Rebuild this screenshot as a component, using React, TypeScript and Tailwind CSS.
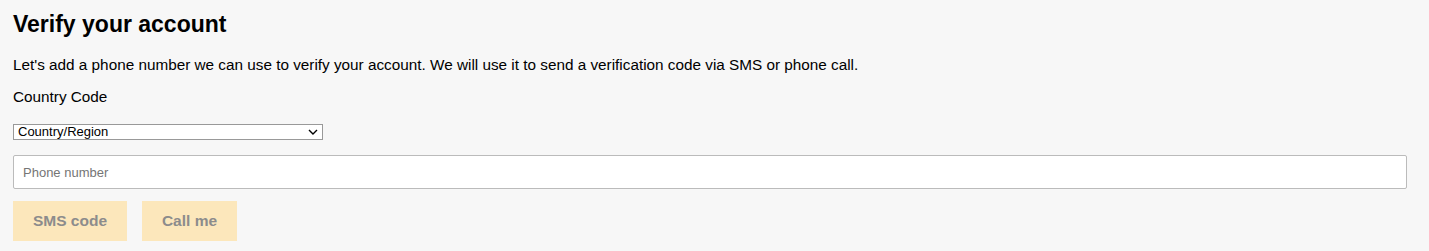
export default function App() {
  return (
    <div className="min-h-screen bg-[#f7f7f7] px-[13px] pt-[9px] font-['Liberation_Sans',Arial,sans-serif] text-black">
      <h1 className="text-[23px] font-bold leading-[30px]">Verify your account</h1>
      <p className="mt-[17px] text-[15.3px] leading-[18px]">
        Let's add a phone number we can use to verify your account. We will use it to send a verification code via SMS or phone call.
      </p>
      <label htmlFor="country" className="mt-[14px] block text-[15.3px] leading-[18px]">
        Country Code
      </label>
      <div className="relative mt-[18px] w-[310px]">
        <select
          id="country"
          className="block h-[16px] w-full appearance-none border border-[#999] bg-white px-[4px] text-[13px] leading-[14px] text-black outline-none"
          defaultValue=""
        >
          <option value="">Country/Region</option>
        </select>
        <svg
          className="pointer-events-none absolute right-[5px] top-[4px] h-[8px] w-[10px]"
          viewBox="0 0 10 8"
          fill="none"
          stroke="#000"
          strokeWidth="1.4"
        >
          <path d="M1 2l4 4 4-4" />
        </svg>
      </div>
      <input
        type="tel"
        placeholder="Phone number"
        className="mt-[15px] block h-[34px] w-[1394px] rounded-[2px] border border-[#bbb] bg-white px-[9px] text-[13px] placeholder:text-[#757575] outline-none"
      />
      <div className="mt-[12px] flex gap-[15px]">
        <button disabled className="h-[40px] w-[114px] bg-[#fce7bb] text-[15.5px] font-bold text-[#8c8c8c]">
          SMS code
        </button>
        <button disabled className="h-[40px] w-[95px] bg-[#fce7bb] text-[15.5px] font-bold text-[#8c8c8c]">
          Call me
        </button>
      </div>
    </div>
  );
}
